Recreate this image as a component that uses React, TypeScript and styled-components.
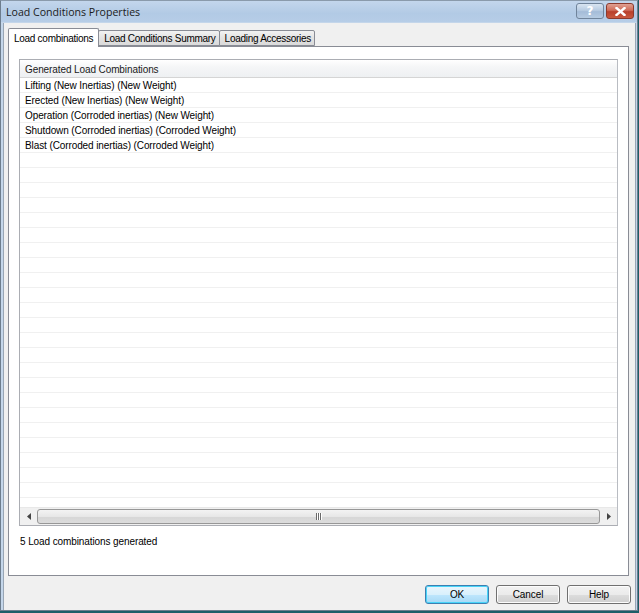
import React from "react";
import styled, { createGlobalStyle } from "styled-components";

const Global = createGlobalStyle`
  html, body { margin: 0; padding: 0; background: #1d5d68; }
  body { width: 639px; height: 613px; overflow: hidden; font-family: "Liberation Sans", Arial, sans-serif; }
`;

const Desktop = styled.div`
  width: 639px;
  height: 613px;
  background: #1d5d68;
`;

const Window = styled.div`
  width: 638px;
  height: 611px;
  box-sizing: border-box;
  display: flex;
  flex-direction: column;
  background: #c4d6ea;
  border: 1px solid #6d7d8d;
  border-top-color: #8a9aab;
`;

const TitleBar = styled.div`
  height: 21px;
  flex: none;
  display: flex;
  align-items: center;
  padding: 0 3px 0 5px;
  background: linear-gradient(#c3d6ec, #b2cae5 60%, #b6cde7);
`;

const Title = styled.div`
  flex: 1;
  font-family: "Open Sans", "Liberation Sans", sans-serif;
  font-size: 10.6px;
  color: #1b1b1b;
`;

const CaptionButton = styled.div<{ $close?: boolean }>`
  width: 28px;
  height: 16px;
  box-sizing: border-box;
  margin-left: ${(p) => (p.$close ? 2 : 0)}px;
  margin-top: -1px;
  border: 1px solid ${(p) => (p.$close ? "#8b3a2e" : "#70849b")};
  border-radius: 3px;
  display: flex;
  align-items: center;
  justify-content: center;
  background: ${(p) =>
    p.$close
      ? "linear-gradient(#e0a193, #cf6b58 45%, #b8402c 55%, #c9593f)"
      : "linear-gradient(#d8e4f1, #b8cce2 45%, #a4bcd8 55%, #b6cbe2)"};
  color: #fff;
  font-family: "DejaVu Sans", sans-serif;
  font-weight: bold;
  font-size: 12px;
  line-height: 1;
`;

const Client = styled.div`
  flex: 1;
  display: flex;
  flex-direction: column;
  background: #f0f0f0;
  margin: 1px 1px 0 2px;
  border-left: 1px solid #98a5b4;
  border-right: 1px solid #98a5b4;
  padding: 6px 4px 6px 4px;
  font-size: 10px;
  letter-spacing: -0.1px;
  color: #000;
`;

const TabStrip = styled.div`
  display: flex;
  align-items: flex-end;
  height: 17px;
  padding-left: 0;
  margin-right: 2px;
  position: relative;
  z-index: 1;
`;

const Tab = styled.div<{ $active?: boolean }>`
  height: ${(p) => (p.$active ? 19 : 16)}px;
  box-sizing: border-box;
  padding: 0 ${(p) => (p.$active ? 5 : 3)}px 0 5px;
  margin-left: ${(p) => (p.$active ? 0 : -1)}px;
  display: flex;
  align-items: center;
  border: 1px solid #898c95;
  border-bottom: ${(p) => (p.$active ? "none" : "1px solid #898c95")};
  background: ${(p) => (p.$active ? "#fff" : "linear-gradient(#f2f2f2, #e3e3e3 50%, #dadada)")};
  margin-bottom: ${(p) => (p.$active ? -1 : 0)}px;
  border-radius: 2px 2px 0 0;
  white-space: nowrap;
  letter-spacing: -0.28px;
  &:first-child { margin-left: 0; }
`;

const Panel = styled.div`
  flex: 1;
  border: 1px solid #898c95;
  background: #fff;
  display: flex;
  flex-direction: column;
  padding: 12px 10px 0 10px;
  margin-right: 2px;
`;

const ListView = styled.div`
  height: 467px;
  box-sizing: border-box;
  border: 1px solid #abadb3;
  border-right-color: #b9bcc2;
  display: flex;
  flex-direction: column;
  overflow: hidden;
`;

const Header = styled.div`
  height: 18px;
  flex: none;
  display: flex;
  align-items: center;
  padding-left: 5px;
  padding-top: 1px;
  box-sizing: border-box;
  background: linear-gradient(#ffffff, #f5f6f7 40%, #eef0f2);
  border-bottom: 1px solid #d5d5d5;
  color: #1a1a1a;
`;

const Rows = styled.div`
  flex: 1;
  overflow: hidden;
`;

const Row = styled.div`
  height: 15px;
  box-sizing: border-box;
  border-bottom: 1px solid #f0f0f0;
  display: flex;
  align-items: center;
  padding-left: 5px;
  padding-top: 1px;
  white-space: nowrap;
`;

const HScroll = styled.div`
  height: 17px;
  flex: none;
  display: flex;
  align-items: center;
  background: #f0f0f0;
  border-top: 1px solid #e8e8e8;
`;

const Arrow = styled.div`
  width: 17px;
  height: 17px;
  display: flex;
  align-items: center;
  justify-content: center;
  flex: none;
`;

const Thumb = styled.div`
  flex: 1;
  height: 15px;
  box-sizing: border-box;
  border: 1px solid #979797;
  border-radius: 3px;
  background: linear-gradient(#f3f3f3, #e7e7e7 50%, #d6d6d6 51%, #dcdcdc);
  display: flex;
  align-items: center;
  justify-content: center;
`;

const Grip = styled.div`
  display: flex;
  gap: 1px;
  & > span {
    width: 1px;
    height: 7px;
    background: #6a6a6a;
    box-shadow: 1px 0 0 #fff;
  }
`;

const Status = styled.div`
  margin-top: 10px;
  padding-left: 1px;
`;

const ButtonRow = styled.div`
  display: flex;
  justify-content: flex-end;
  gap: 7px;
  padding: 9px 0 0 0;
`;

const Button = styled.div<{ $default?: boolean }>`
  width: 64px;
  height: 19px;
  box-sizing: border-box;
  border: 1px solid ${(p) => (p.$default ? "#3c7fb1" : "#707070")};
  border-radius: 3px;
  display: flex;
  align-items: center;
  justify-content: center;
  background: ${(p) =>
    p.$default
      ? "linear-gradient(#eaf6fd, #d9f0fc 50%, #bee6fd 51%, #a7d9f5)"
      : "linear-gradient(#f2f2f2, #ebebeb 50%, #dddddd 51%, #cfcfcf)"};
  box-shadow: inset 0 0 0 1px ${(p) => (p.$default ? "#48d4f8" : "#fcfcfc")};
  color: #000;
`;

const rows = [
  "Lifting (New Inertias) (New Weight)",
  "Erected (New Inertias) (New Weight)",
  "Operation (Corroded inertias) (New Weight)",
  "Shutdown (Corroded inertias) (Corroded Weight)",
  "Blast (Corroded inertias) (Corroded Weight)",
];

export default function App() {
  const all = [...rows, ...Array.from({ length: 25 }, () => "")];
  return (
    <Desktop>
      <Global />
      <Window>
        <TitleBar>
          <Title>Load Conditions Properties</Title>
          <CaptionButton>?</CaptionButton>
          <CaptionButton $close>
            <svg width="11" height="9" viewBox="0 0 11 9">
              <path d="M1.5 1 L9.5 8 M9.5 1 L1.5 8" stroke="#fff" strokeWidth="2.4" strokeLinecap="square" />
            </svg>
          </CaptionButton>
        </TitleBar>
        <Client>
          <TabStrip>
            <Tab $active>Load combinations</Tab>
            <Tab>Load Conditions Summary</Tab>
            <Tab>Loading Accessories</Tab>
          </TabStrip>
          <Panel>
            <ListView>
              <Header>Generated Load Combinations</Header>
              <Rows>
                {all.map((r, i) => (
                  <Row key={i}>{r}</Row>
                ))}
              </Rows>
              <HScroll>
                <Arrow>
                  <svg width="4" height="7" viewBox="0 0 4 7">
                    <path d="M4 0 L0 3.5 L4 7 Z" fill="#444" />
                  </svg>
                </Arrow>
                <Thumb>
                  <Grip>
                    <span />
                    <span />
                    <span />
                  </Grip>
                </Thumb>
                <Arrow>
                  <svg width="4" height="7" viewBox="0 0 4 7">
                    <path d="M0 0 L4 3.5 L0 7 Z" fill="#444" />
                  </svg>
                </Arrow>
              </HScroll>
            </ListView>
            <Status>5 Load combinations generated</Status>
          </Panel>
          <ButtonRow>
            <Button $default>OK</Button>
            <Button>Cancel</Button>
            <Button>Help</Button>
          </ButtonRow>
        </Client>
      </Window>
    </Desktop>
  );
}
